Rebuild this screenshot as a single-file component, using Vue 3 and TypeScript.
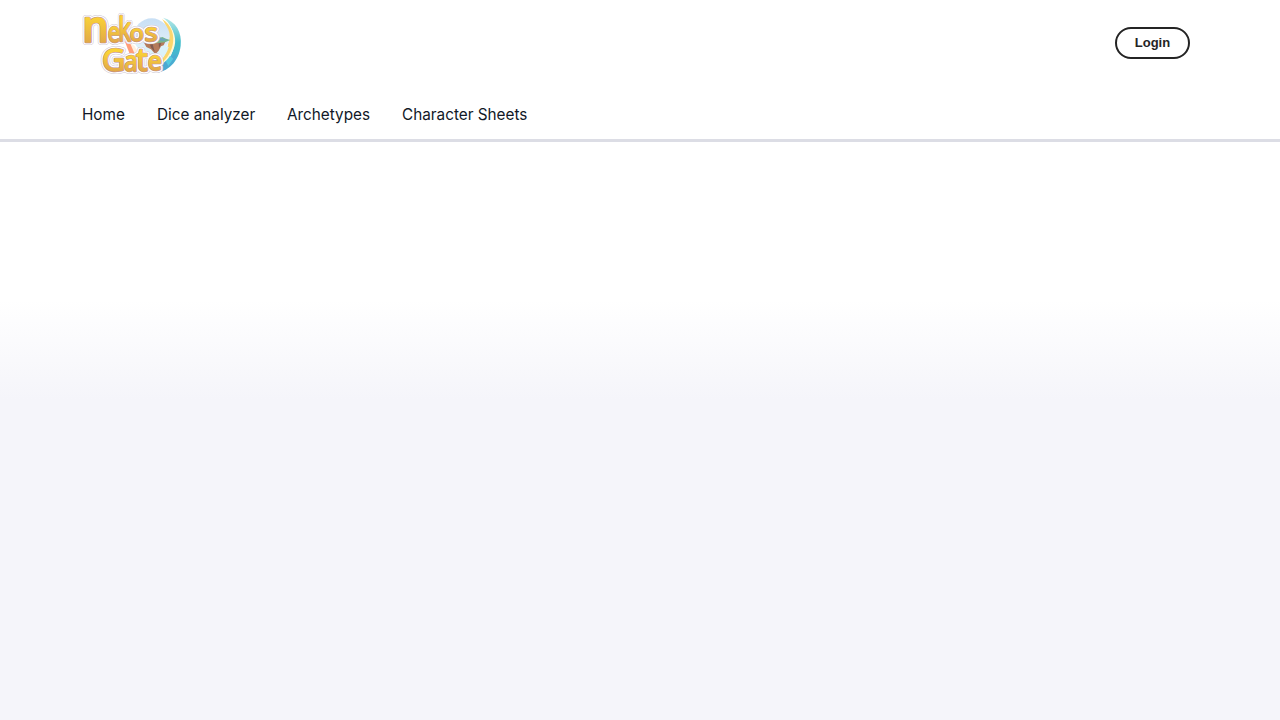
<script setup lang="ts">
interface NavItem { label: string; width: number }
interface Glyph { char: string; x: number; y: number; size: number; width: number; bold?: boolean }

const navItems: NavItem[] = [
  { label: 'Home', width: 43 },
  { label: 'Dice analyzer', width: 98 },
  { label: 'Archetypes', width: 82.5 },
  { label: 'Character Sheets', width: 126 },
]
const glyphs: Glyph[] = [
  { char: 'n', x: 19, y: 108, size: 130, width: 80, bold: true },
  { char: 'e', x: 95, y: 107, size: 84, width: 37 },
  { char: 'k', x: 127, y: 104, size: 96, width: 38 },
  { char: 'o', x: 161, y: 104, size: 68, width: 42 },
  { char: 's', x: 206, y: 104, size: 70, width: 38 },
  { char: 'G', x: 78, y: 194, size: 92, width: 70 },
  { char: 'a', x: 145, y: 195, size: 80, width: 40 },
  { char: 't', x: 181, y: 194, size: 92, width: 34 },
  { char: 'e', x: 215, y: 193, size: 76, width: 42 },
]
</script>

<template>
  <div class="page">
    <header class="header">
      <div class="top">
        <svg class="logo" viewBox="0 0 336 216" role="img" aria-label="Nekos Gate">
          <defs>
            <linearGradient id="gold" x1="0" y1="0" x2="0" y2="1">
              <stop offset="0.35" stop-color="#fad236" />
              <stop offset="0.9" stop-color="#dc9f4c" />
            </linearGradient>
            <linearGradient id="sky" x1="0" y1="0" x2="0" y2="1">
              <stop offset="0" stop-color="#c8dff5" />
              <stop offset="1" stop-color="#e7f4fa" />
            </linearGradient>
            <linearGradient id="teal" x1="0" y1="0" x2="0" y2="1">
              <stop offset="0" stop-color="#b9e9e8" />
              <stop offset="0.45" stop-color="#42bdcb" />
              <stop offset="1" stop-color="#4caad4" />
            </linearGradient>
          </defs>
          <path d="M261 35C300 45 319 79 314 119C309 165 276 200 232 201C272 177 296 143 295 105C293 74 282 49 261 35Z" fill="url(#teal)" />
          <path d="M264 165L303 143C290 178 268 197 232 201Z" fill="#4da9d2" />
          <path d="M268 163L279 147L292 158L277 180Z" fill="#55c9df" />
          <path d="M266 43C295 68 306 104 291 133C280 158 265 172 247 181C271 156 284 132 284 104C285 78 278 57 266 43Z" fill="#fff8d6" />
          <path d="M258 39C289 58 296 90 290 117C284 143 268 167 247 177C265 153 276 130 277 105C278 76 270 55 258 39Z" fill="#fbd66d" />
          <circle cx="227" cy="91" r="54" fill="url(#sky)" />
          <path d="M175 111C193 122 222 132 254 118L278 123C269 154 250 170 222 172Z" fill="#dbf2fa" />
          <path d="M146 105L164 112L183 147L165 154Z" fill="#ff9d79" />
          <path d="M162 111L175 119L193 150L181 155Z" fill="#fff0df" />
          <path d="M203 108L270 103L263 118L255 121L248 134L238 145L225 130L211 123Z" fill="#b57b5b" />
          <path d="M222 116L230 115L236 137L226 126M248 112L256 112L249 127Z" fill="#805b50" />
          <path d="M203 107L242 99L259 93L270 98L283 102L267 109L221 113Z" fill="#75b58d" />
          <path d="M240 101L251 94L263 99L274 100L263 105Z" fill="#6aa3c0" />
          <use href="#wordmark" class="shadow" />
          <use href="#wordmark" class="halo" />
          <use href="#wordmark" class="edge" />
          <g class="face">
            <g id="wordmark">
              <text
                v-for="(glyph, index) in glyphs"
                :key="index"
                :x="glyph.x"
                :y="glyph.y"
                :class="{ bold: glyph.bold }"
                :font-size="glyph.size"
                :textLength="glyph.width"
                lengthAdjust="spacingAndGlyphs"
              >{{ glyph.char }}</text>
            </g>
          </g>
        </svg>
        <button class="login" type="button">Login</button>
      </div>
      <nav class="nav">
        <a v-for="item in navItems" :key="item.label" :style="{ width: `${item.width}px` }">{{ item.label }}</a>
      </nav>
    </header>
    <main class="content"></main>
  </div>
</template>

<style>
body { margin: 0; background: #f5f5fa; }
</style>

<style scoped>
.page {
  min-height: 720px;
  display: flex;
  flex-direction: column;
  background: #f5f5fa;
  font-family: Inter, "Liberation Sans", sans-serif;
}
.header {
  height: 142px;
  box-sizing: border-box;
  border-bottom: 3px solid #dcdde5;
  background: #fff;
}
.top {
  height: 86px;
  box-sizing: border-box;
  padding: 6px 90px 0 76px;
  display: flex;
  justify-content: space-between;
  align-items: flex-start;
}
.logo { width: 112px; height: 72px; display: block; overflow: visible; }
.logo text {
  font-family: "Open Sans", "Noto Sans", sans-serif;
  font-weight: 400;
  stroke-linejoin: round;
  stroke-linecap: round;
}
.logo text.bold { font-weight: 600; }
.shadow { fill: #cdc6d2; stroke: #cdc6d2; stroke-width: 18px; }
.halo { fill: #fff; stroke: #fff; stroke-width: 15px; }
.edge { fill: #b78aa4; stroke: #b78aa4; stroke-width: 7px; }
.face { fill: url(#gold); stroke: url(#gold); stroke-width: 4px; }
.login {
  width: 75px;
  height: 32px;
  margin-top: 21px;
  padding: 0;
  border: 2px solid #242424;
  border-radius: 16px;
  background: #fff;
  color: #242424;
  font: 700 13px/28px "Liberation Sans", sans-serif;
}
.nav { height: 56px; padding-left: 82px; display: flex; gap: 32px; }
.nav a {
  color: #111827;
  font-size: 16px;
  line-height: 56px;
  white-space: nowrap;
  transform: scaleX(0.956);
  transform-origin: left center;
}
.content {
  flex: 1;
  background: linear-gradient(to bottom, #fff 0, #fff 158px, #f5f5fa 258px);
}
</style>
